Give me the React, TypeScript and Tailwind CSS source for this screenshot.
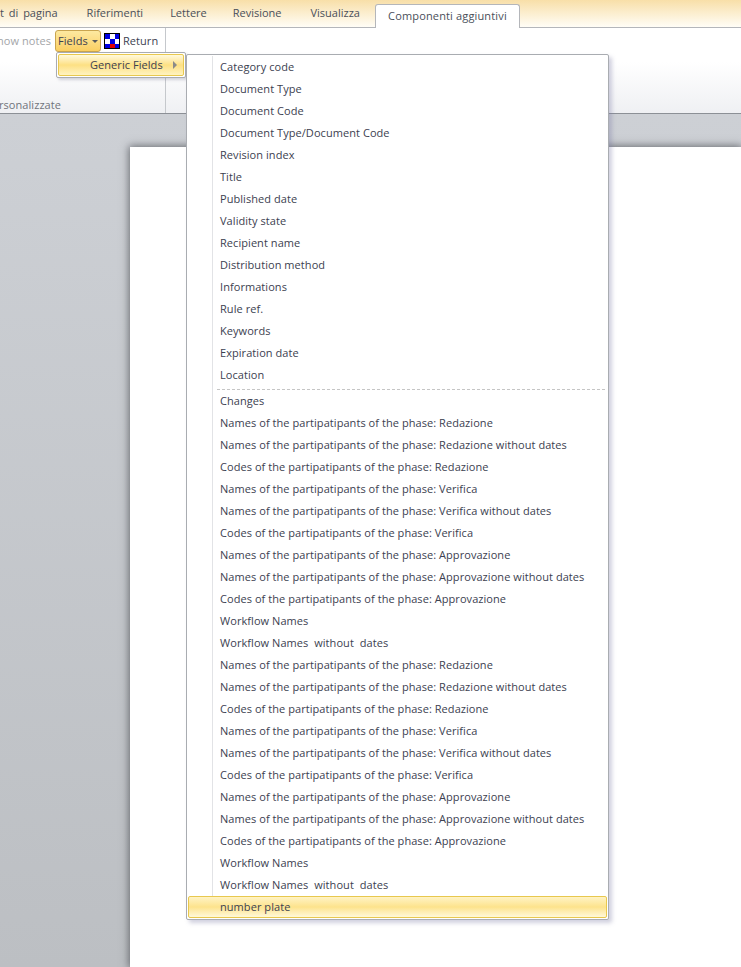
import React from "react";

const tabs = [
  { label: "t di pagina", className: "mr-[29px] [word-spacing:2px]" },
  { label: "Riferimenti", className: "mr-[27px]" },
  { label: "Lettere", className: "mr-[26px]" },
  { label: "Revisione", className: "mr-[29px]" },
  { label: "Visualizza", className: "" },
];

const phases = ["Redazione", "Verifica", "Approvazione"];

const phaseRows = phases.flatMap((phase) => [
  `Names of the partipatipants of the phase: ${phase}`,
  `Names of the partipatipants of the phase: ${phase} without dates`,
  `Codes of the partipatipants of the phase: ${phase}`,
]);

const generalFields = [
  "Category code",
  "Document Type",
  "Document Code",
  "Document Type/Document Code",
  "Revision index",
  "Title",
  "Published date",
  "Validity state",
  "Recipient name",
  "Distribution method",
  "Informations",
  "Rule ref.",
  "Keywords",
  "Expiration date",
  "Location",
];

const workflowFields = [
  "Changes",
  ...phaseRows,
  "Workflow Names",
  "Workflow Names  without  dates",
  ...phaseRows,
  "Workflow Names",
  "Workflow Names  without  dates",
];

const MenuRow = ({ label }: { label: string }) => (
  <div className="h-[22px] pl-[32px] leading-[22px] whitespace-pre">{label}</div>
);

const ReturnIcon = () => (
  <svg width="16" height="16" viewBox="0 0 16 16" className="shrink-0">
    <rect x="0.5" y="0.5" width="15" height="15" fill="#fff" stroke="#000" />
    <rect x="1" y="1" width="5" height="5" fill="#0000e0" />
    <rect x="11" y="1" width="4" height="5" fill="#0000e0" />
    <rect x="6" y="6" width="5" height="5" fill="#0000e0" />
    <rect x="1" y="11" width="5" height="4" fill="#0000e0" />
    <rect x="11" y="11" width="4" height="4" fill="#0000e0" />
    <rect x="6" y="11" width="5" height="4" fill="#e00000" />
  </svg>
);

export default function App() {
  return (
    <div
      className="relative flex h-[967px] w-[741px] flex-col overflow-hidden bg-white text-[11px] tracking-[0.06px] text-[#3c4150]"
      style={{ fontFamily: '"Open Sans", sans-serif' }}
    >
      {/* Tab strip */}
      <div className="flex h-[28px] shrink-0 items-end border-b border-[#b4b6ba] bg-gradient-to-b from-[#f8dfa8] to-[#fffdf6]">
        <div className="flex h-[27px] items-center tracking-normal text-[#4a4f5a]">
          {tabs.map((tab) => (
            <span key={tab.label} className={tab.className}>
              {tab.label}
            </span>
          ))}
        </div>
        <div className="mb-[-1px] ml-[15px] flex h-[24px] w-[145px] items-center justify-center rounded-t-[3px] border border-b-0 border-[#b4b6ba] bg-white tracking-[0.15px] text-[#4a4f5a]">
          Componenti aggiuntivi
        </div>
      </div>

      {/* Ribbon body */}
      <div className="flex h-[86px] shrink-0 border-b border-[#8c9096] bg-gradient-to-b from-white from-40% to-[#eff0f3]">
        <div className="flex w-[166px] shrink-0 flex-col border-r border-[#c5c8cc]">
          <div className="flex h-[25px] items-center pt-px">
            <span className="ml-[-3px] w-[58px] text-[#a3a5a8]">how notes</span>
            <div className="flex h-[22px] w-[46px] items-center rounded-[3px] border border-[#c9a550] bg-gradient-to-b from-[#fde9a0] to-[#fbcf62] pl-[2px]">
              Fields
              <span className="ml-[4px] h-0 w-0 border-x-[3px] border-t-[3px] border-x-transparent border-t-[#5b5b5b]" />
            </div>
            <div className="ml-[3px] flex items-center gap-[3px]">
              <ReturnIcon />
              <span>Return</span>
            </div>
          </div>
          <div className="ml-[-1px] mt-auto text-[#70747c]">rsonalizzate</div>
        </div>
      </div>

      {/* Document area */}
      <div className="flex min-h-0 flex-1 bg-gradient-to-b from-[#cdd0d5] to-[#bcbfc3]">
        <div className="w-[130px] shrink-0" />
        <div className="mt-[33px] flex-1 bg-white shadow-[0_0_8px_1px_rgba(60,62,68,0.7)]" />
      </div>

      {/* Fields dropdown */}
      <div className="absolute left-[56px] top-[52px] h-[26px] w-[130px] rounded-[2px] border border-[#a9acb1] bg-white p-px shadow-[2px_2px_3px_rgba(120,120,150,0.3)]">
        <div className="relative flex h-[22px] items-center rounded-[2px] border border-[#e8c84e] bg-gradient-to-b from-[#fff9dc] via-[#fde083] to-[#fff3c0] pl-[31px]">
          Generic Fields
          <span className="absolute right-[6px] h-0 w-0 border-y-[4px] border-l-[4px] border-y-transparent border-l-[#8a8a8a]" />
        </div>
      </div>

      {/* Generic Fields submenu */}
      <div className="absolute left-[186px] top-[54px] w-[423px] rounded-[2px] border border-[#a9acb1] bg-white p-px shadow-[3px_3px_4px_rgba(120,120,160,0.35)]">
        <div className="absolute bottom-[23px] left-[25px] top-px w-px bg-[#e2e3e6]" />
        {generalFields.map((label) => (
          <MenuRow key={label} label={label} />
        ))}
        <div className="ml-[29px] mr-[2px] h-[4px] border-b border-dashed border-[#c5c5c5]" />
        {workflowFields.map((label, i) => (
          <MenuRow key={`${label}-${i}`} label={label} />
        ))}
        <div className="flex h-[22px] items-center rounded-[2px] border border-[#e8c84e] bg-gradient-to-b from-[#fff3c4] via-[#fde38c] to-[#fff8d8] pl-[31px]">
          number plate
        </div>
      </div>
    </div>
  );
}
